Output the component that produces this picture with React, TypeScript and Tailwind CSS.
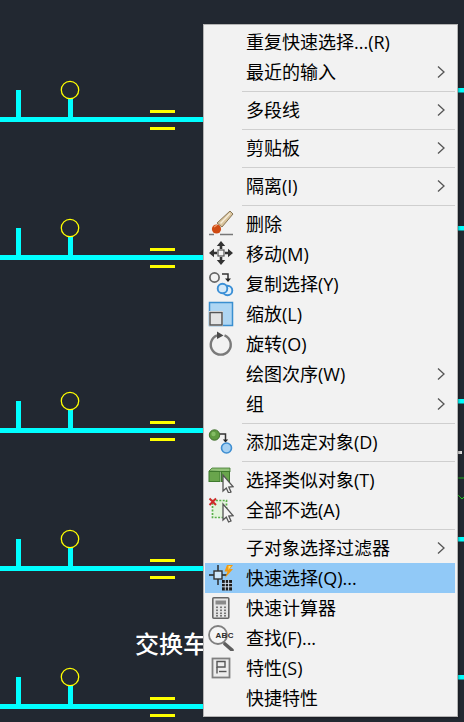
import React from "react";

const Chevron = () => (
  <svg width="8" height="14" viewBox="0 0 8 14" className="ml-auto mr-[10px] shrink-0">
    <path d="M1 1.5 L7 7 L1 12.5" fill="none" stroke="#555" strokeWidth="1.3" />
  </svg>
);

const Ico = ({ children }: { children: React.ReactNode }) => (
  <svg width="26" height="26" viewBox="0 0 26 26" className="block">
    {children}
  </svg>
);

const Arrow = ({ d }: { d: string }) => <path d={d} fill="#333" />;

const Cursor = ({ dx = 0, dy = 0 }: { dx?: number; dy?: number }) => (
  <path
    transform={`translate(${dx} ${dy})`}
    d="M15 7 V23 L18.3 20 L20.6 25 L23 24 L20.8 19 L25 18.6 Z"
    fill="#f4f4f4"
    stroke="#555"
    strokeWidth="1.3"
  />
);

const icons: Record<string, React.ReactNode> = {
  erase: (
    <Ico>
      <path d="M22 0 L25 3 L14 16 L9 12 Z" fill="#d8c39c" stroke="#7d6a4a" strokeWidth="0.9" />
      <path d="M22 2.5 L12.5 12.5" stroke="#f5ecd8" strokeWidth="1.5" />
      <circle cx="8.5" cy="18" r="4.6" fill="#cf4a12" />
      <path d="M6 16 L9 14" stroke="#ee9a68" strokeWidth="1.4" />
      <path d="M1 23.5 H6 M12 23.5 H25" stroke="#777" strokeWidth="1.5" />
    </Ico>
  ),
  move: (
    <Ico>
      <rect x="10" y="9" width="6" height="6" fill="#f4f4f4" stroke="#555" strokeWidth="1.2" />
      <Arrow d="M13 0 L17.2 5 L14.3 5 L14.3 8 L11.7 8 L11.7 5 L8.8 5 Z" />
      <Arrow d="M13 24 L17.2 19 L14.3 19 L14.3 16 L11.7 16 L11.7 19 L8.8 19 Z" />
      <Arrow d="M1 12 L6 7.8 L6 10.7 L9 10.7 L9 13.3 L6 13.3 L6 16.2 Z" />
      <Arrow d="M25 12 L20 7.8 L20 10.7 L17 10.7 L17 13.3 L20 13.3 L20 16.2 Z" />
    </Ico>
  ),
  copy: (
    <Ico>
      <circle cx="6.5" cy="6.5" r="4.6" fill="#f4f4f4" stroke="#666" strokeWidth="1.7" />
      <path d="M14 3 H20 V8" fill="none" stroke="#333" strokeWidth="1.5" />
      <path d="M17 7.5 H23 L20 11 Z" fill="#222" />
      <circle cx="19.5" cy="19.5" r="4.8" fill="#e3f0fa" stroke="#3a8fd6" strokeWidth="1.9" />
      <circle cx="14.5" cy="17.5" r="4.8" fill="#d3e8f8" stroke="#3a8fd6" strokeWidth="1.9" />
    </Ico>
  ),
  scale: (
    <Ico>
      <rect x="1.5" y="1.5" width="23" height="23" fill="#aed6f3" stroke="#3a8fd0" strokeWidth="1.5" />
      <rect x="1" y="10" width="14" height="15" fill="#f6f6f6" />
      <rect x="2" y="11.5" width="12" height="12.5" fill="#e4e4e4" stroke="#555" strokeWidth="1.5" />
    </Ico>
  ),
  rotate: (
    <Ico>
      <path d="M9 4.4 A10 10 0 1 0 16.5 4.4" fill="none" stroke="#7a7a7a" strokeWidth="2.4" />
      <path d="M9 0.5 L15.5 4.5 L9 8 Z" fill="#4a4a4a" />
    </Ico>
  ),
  add: (
    <Ico>
      <circle cx="6.5" cy="6" r="5.2" fill="#5f9a40" stroke="#437030" strokeWidth="1" />
      <circle cx="5.5" cy="5" r="2.2" fill="#84bc64" />
      <path d="M12 5 H17.5 V11" fill="none" stroke="#333" strokeWidth="1.5" />
      <path d="M14.8 10.5 H20.2 L17.5 13.5 Z" fill="#222" />
      <circle cx="18.5" cy="19" r="5" fill="#a6d0f2" stroke="#3f8fd2" strokeWidth="1.6" />
    </Ico>
  ),
  similar: (
    <Ico>
      <path d="M1 4 L4 1 H22 V5 Z" fill="#93c27a" stroke="#3f7a2e" strokeWidth="0.8" />
      <rect x="1" y="4.5" width="11" height="10" fill="#69a54c" stroke="#3f7a2e" strokeWidth="1" />
      <rect x="13.5" y="4.5" width="8" height="10" fill="#69a54c" stroke="#3f7a2e" strokeWidth="1" />
      <Cursor dy={1} />
    </Ico>
  ),
  none: (
    <Ico>
      <rect x="4.5" y="3.5" width="14" height="17" fill="#e3f4dc" stroke="#58b048" strokeWidth="1.7" strokeDasharray="2 1.4" />
      <path d="M1.5 1.5 L8 8 M8 1.5 L1.5 8" stroke="#d02a2a" strokeWidth="2" />
      <Cursor />
    </Ico>
  ),
  quick: (
    <Ico>
      <path d="M1 10 H6 M14 10 H19 M10 0 V6 M10 14 V20" stroke="#222" strokeWidth="1.4" />
      <rect x="6" y="6" width="8" height="8" fill="#cfe6fa" stroke="#333" strokeWidth="1.4" />
      <path d="M19 0 L25 0 L22 4 L25 4 L17 13 L19.5 6.5 L16.5 6.5 Z" fill="#f29a12" />
      <path d="M20.5 1 L23 1 L20.5 5" fill="#ffe27a" />
      <rect x="14" y="15" width="10" height="10.5" fill="#1c1c1c" />
      <path d="M17.3 15 V25.5 M20.6 15 V25.5 M14 18.4 H24 M14 21.8 H24" stroke="#dbeafa" strokeWidth="0.9" />
    </Ico>
  ),
  calc: (
    <Ico>
      <rect x="4.8" y="2.8" width="16" height="20.4" rx="1" fill="#e6e6e6" stroke="#666" strokeWidth="1.6" />
      <rect x="7.5" y="5.5" width="10.5" height="4" fill="#8a8a8a" />
      {[11.5, 14.5, 17.5, 20].map((y) =>
        [8, 12, 16].map((x) => <rect key={`${x}-${y}`} x={x} y={y} width="2" height="1.6" fill="#777" />),
      )}
    </Ico>
  ),
  find: (
    <Ico>
      <circle cx="10" cy="10" r="9" fill="#f6f6f6" stroke="#808080" strokeWidth="1.8" />
      <text x="7.5" y="13" fontSize="8" fontWeight="700" fill="#2a2a2a" textLength="18" fontFamily="'Liberation Sans', sans-serif">
        ABC
      </text>
      <path d="M17 19 L24 25" stroke="#5e5e5e" strokeWidth="3.6" strokeLinecap="round" />
    </Ico>
  ),
  props: (
    <Ico>
      <rect x="4.5" y="3.5" width="17" height="19" fill="#ededed" stroke="#808080" strokeWidth="1.8" />
      <path d="M9 6.5 H17 V12 H9 Z" fill="none" stroke="#555" strokeWidth="1.4" />
      <path d="M9 12 V18.5" stroke="#555" strokeWidth="1.4" />
      <path d="M11 16.5 H18.5" stroke="#555" strokeWidth="1.4" />
    </Ico>
  ),
};

type R = { t: string; icon?: string; sub?: boolean; hot?: boolean; sep?: boolean };

const rows: R[] = [
  { t: "重复快速选择...(R)" },
  { t: "最近的输入", sub: true },
  { t: "", sep: true },
  { t: "多段线", sub: true },
  { t: "", sep: true },
  { t: "剪贴板", sub: true },
  { t: "", sep: true },
  { t: "隔离(I)", sub: true },
  { t: "", sep: true },
  { t: "删除", icon: "erase" },
  { t: "移动(M)", icon: "move" },
  { t: "复制选择(Y)", icon: "copy" },
  { t: "缩放(L)", icon: "scale" },
  { t: "旋转(O)", icon: "rotate" },
  { t: "绘图次序(W)", sub: true },
  { t: "组", sub: true },
  { t: "", sep: true },
  { t: "添加选定对象(D)", icon: "add" },
  { t: "", sep: true },
  { t: "选择类似对象(T)", icon: "similar" },
  { t: "全部不选(A)", icon: "none" },
  { t: "", sep: true },
  { t: "子对象选择过滤器", sub: true },
  { t: "快速选择(Q)...", icon: "quick", hot: true },
  { t: "快速计算器", icon: "calc" },
  { t: "查找(F)...", icon: "find" },
  { t: "特性(S)", icon: "props" },
  { t: "快捷特性" },
];

const Unit = ({ y }: { y: number }) => (
  <g>
    <rect x="0" y={y + 117} width="204" height="5" fill="#00ffff" />
    <rect x="16" y={y + 90} width="5" height="28" fill="#00ffff" />
    <rect x="68" y={y + 99} width="5" height="19" fill="#00ffff" />
    <circle cx="70" cy={y + 90} r="8.7" fill="none" stroke="#ffff00" strokeWidth="1.3" />
    <rect x="150" y={y + 110} width="25" height="3" fill="#ffff00" />
    <rect x="150" y={y + 127} width="25" height="3" fill="#ffff00" />
  </g>
);

export default function App() {
  return (
    <div
      className="relative w-[464px] h-[722px] overflow-hidden bg-[#222831]"
      style={{ fontFamily: "'Open Sans', 'Noto Sans CJK SC', sans-serif" }}
    >
      <svg width="464" height="722" className="absolute left-0 top-0">
        {[0, 138, 311, 449, 587].map((y) => (
          <Unit key={y} y={y} />
        ))}
        {[88, 226, 399, 537, 675].map((y) => (
          <rect key={y} x="456" y={y} width="8" height="4.5" fill="#00ffff" />
        ))}
        <rect x="456" y="451" width="6" height="3" fill="#d8d8d8" />
        <path d="M458 478 H464" stroke="#22aa22" strokeWidth="1" />
        <path d="M458 495 L462 499 L464 497" stroke="#22cc22" strokeWidth="1" fill="none" />
      </svg>

      <div className="absolute left-[135px] top-[626px] text-[24px] leading-[36px] font-medium text-white whitespace-nowrap">
        交换车
      </div>

      <div className="absolute left-[203px] top-[24px] w-[255px] h-[693px] bg-[#f2f2f2] border border-[#b4b4b4] pt-[2px] pl-[1px] pr-[2px] shadow-[1px_1px_2px_rgba(0,0,0,0.35)]">
        {rows.map((r, i) =>
          r.sep ? (
            <div key={i} className="h-[8px] flex items-center pl-[37px]">
              <div className="h-[1px] w-full bg-[#cfcfcf]" />
            </div>
          ) : (
            <div
              key={i}
              className={`h-[30px] flex items-center text-[18px] text-black whitespace-nowrap ${
                r.hot ? "bg-[#91c9f7]" : ""
              }`}
            >
              <div className="w-[41px] shrink-0 pl-[3px]">{r.icon ? icons[r.icon] : null}</div>
              <span>{r.t}</span>
              {r.sub ? <Chevron /> : null}
            </div>
          ),
        )}
      </div>
    </div>
  );
}
